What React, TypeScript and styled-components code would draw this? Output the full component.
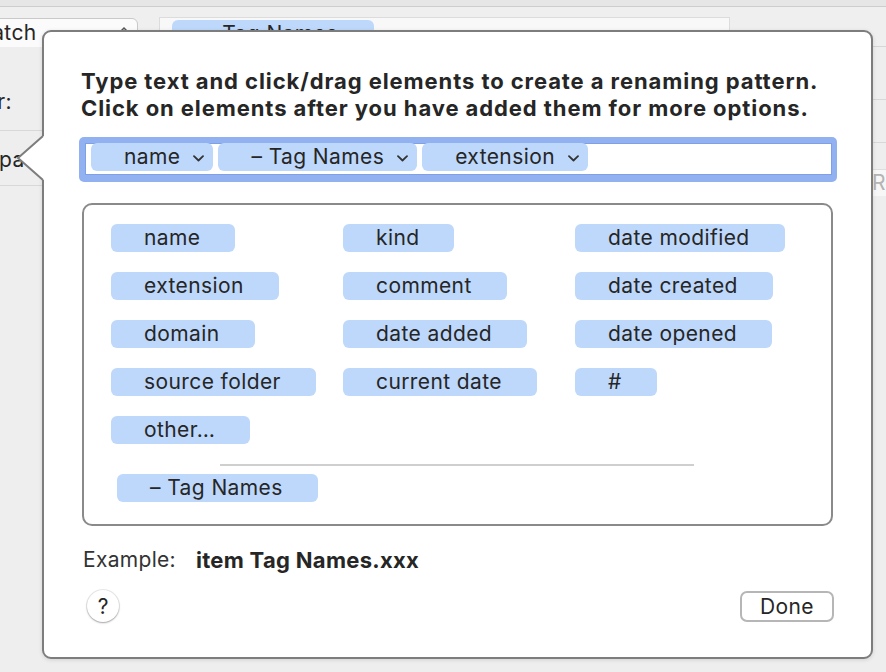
import React from "react";
import styled, { createGlobalStyle } from "styled-components";

const Global = createGlobalStyle`
  html, body { margin: 0; padding: 0; background: #ececec; }
  body {
    font-family: Inter, "Helvetica Neue", "Liberation Sans", Arial, sans-serif;
    -webkit-font-smoothing: antialiased;
    color: #262626;
  }
  #root { width: 886px; height: 672px; position: relative; overflow: hidden; }
`;

const Page = styled.div`
  position: relative;
  width: 886px;
  height: 672px;
  overflow: hidden;
  background: #ececec;
`;

/* ---------- background window (mostly hidden) ---------- */
const BackWindow = styled.div`
  display: flex;
  flex-direction: column;
  width: 886px;
  height: 672px;
`;

const TitleStrip = styled.div`
  height: 6px;
  background: #e6e6e6;
  border-bottom: 1px solid #cdcdcd;
`;

const TopRow = styled.div`
  height: 40px;
  display: flex;
  align-items: flex-start;
  background: #efefef;
  border-bottom: 1px solid #d6d6d6;
  box-sizing: border-box;
`;

const BackPopupButton = styled.div`
  margin: 11px 0 0 -60px;
  width: 198px;
  height: 30px;
  box-sizing: border-box;
  padding: 0 8px 0 37px;
  background: #fbfbfb;
  border: 1px solid #c9c9c9;
  border-radius: 6px;
  font-size: 21px;
  letter-spacing: 0.4px;
  line-height: 28px;
  display: flex;
  align-items: center;
  justify-content: space-between;
`;

const BackField = styled.div`
  margin: 10px 0 0 21px;
  width: 571px;
  height: 34px;
  box-sizing: border-box;
  background: #f8f8f8;
  border: 1px solid #dcdcdc;
  padding: 2px 0 0 12px;
`;

const BackToken = styled.div`
  width: 202px;
  height: 28px;
  box-sizing: border-box;
  padding-left: 33px;
  background: #bed8fb;
  border-radius: 6px;
  font-size: 21px;
  letter-spacing: 0.4px;
  line-height: 28px;
`;

const BackBody = styled.div`
  flex: 1;
  display: flex;
  justify-content: space-between;
  background: #eeeeee;
`;

const BackLeft = styled.div`
  margin-left: -60px;
  width: 150px;
  display: flex;
  flex-direction: column;
`;

const BackLabelRow = styled.div<{ $h: number; $pt: number }>`
  height: ${(p) => p.$h}px;
  box-sizing: border-box;
  padding-top: ${(p) => p.$pt}px;
  border-bottom: 1px solid #d8d8d8;
  font-size: 21px;
  letter-spacing: 0.4px;
  line-height: 24px;
  color: #262626;
  white-space: nowrap;
`;

const RightLabel = styled.div`
  width: 72px;
  text-align: right;
`;

const IndentLabel = styled.div`
  padding-left: 59px;
`;

const BackRight = styled.div`
  margin-right: -64px;
  width: 100px;
  display: flex;
  flex-direction: column;
`;

const BackRightRow = styled.div<{ $h: number }>`
  height: ${(p) => p.$h}px;
  border-bottom: 1px solid #d8d8d8;
  box-sizing: border-box;
`;

const BackRightField = styled.div`
  margin: 26px 0 0 10px;
  height: 26px;
  background: #f7f7f7;
  border-top: 1px solid #dedede;
  font-size: 21px;
  line-height: 26px;
  padding-left: 12px;
  color: #b4b4b4;
`;

/* ---------- popover ---------- */
const Popover = styled.div`
  position: absolute;
  left: 42px;
  top: 30px;
  width: 831px;
  height: 629px;
  box-sizing: border-box;
  background: #ffffff;
  border: 2px solid #7d7d7d;
  border-radius: 9px;
  padding: 36px 37px 0 37px;
  display: flex;
  flex-direction: column;
  box-shadow: 0 1px 4px rgba(0, 0, 0, 0.12);
`;

const Arrow = styled.svg`
  position: absolute;
  left: -27px;
  top: 104px;
  overflow: visible;
`;

const Headline = styled.div`
  font-size: 22px;
  font-weight: 700;
  letter-spacing: 0.92px;
  line-height: 27px;
  color: #262626;
  white-space: nowrap;
`;

const PatternField = styled.div`
  margin: 15px 0 0 -2px;
  width: 758px;
  height: 45px;
  box-sizing: border-box;
  border-radius: 5px;
  background: #92b1f1;
  padding: 6px 5px 7px 6px;
`;

const PatternInner = styled.div`
  height: 100%;
  box-sizing: border-box;
  background: #ffffff;
  box-shadow: inset 0 0 0 1px #7f9fe6;
  display: flex;
  align-items: center;
  gap: 5px;
  padding: 0 6px;
`;

const Token = styled.div<{ $chevron?: boolean }>`
  height: 28px;
  box-sizing: border-box;
  display: inline-flex;
  align-items: center;
  gap: 13px;
  padding: ${(p) => (p.$chevron ? "0 9px 0 33px" : "0 35px 0 33px")};
  background: #bed8fb;
  border-radius: 6px;
  font-size: 21px;
  letter-spacing: 0.4px;
  line-height: 28px;
  color: #262626;
  white-space: nowrap;
  align-self: flex-start;
`;

const Chevron = styled.svg`
  flex: none;
  margin-top: 2px;
`;

const ElementBox = styled.div`
  margin: 21px 0 0 1px;
  width: 751px;
  height: 323px;
  box-sizing: border-box;
  border: 2px solid #8a8a8a;
  border-radius: 10px;
  padding: 19px 0 0 27px;
  display: flex;
  flex-direction: column;
`;

const Columns = styled.div`
  display: flex;
`;

const Column = styled.div`
  width: 232px;
  display: flex;
  flex-direction: column;
  gap: 20px;
`;

const Separator = styled.div`
  margin: 20px 0 0 109px;
  width: 474px;
  height: 2px;
  background: #cfcfcf;
`;

const TagRow = styled.div`
  margin: 8px 0 0 6px;
  display: flex;
`;

const ExampleRow = styled.div`
  margin: 22px 0 0 2px;
  display: flex;
  gap: 20px;
  font-size: 21px;
  letter-spacing: 0.3px;
  line-height: 24px;
`;

const ExampleLabel = styled.span`
  color: #333333;
`;

const ExampleValue = styled.span`
  font-size: 22px;
  font-weight: 700;
  color: #262626;
`;

const BottomRow = styled.div`
  margin-top: 18px;
  padding-left: 6px;
  display: flex;
  align-items: center;
  justify-content: space-between;
`;

const HelpButton = styled.div`
  width: 32px;
  height: 32px;
  border-radius: 50%;
  background: #ffffff;
  box-shadow: 0 0 0 1px rgba(0, 0, 0, 0.08), 0 1px 2px rgba(0, 0, 0, 0.3);
  display: flex;
  align-items: center;
  justify-content: center;
  font-size: 21px;
  color: #262626;
`;

const DoneButton = styled.div`
  width: 94px;
  height: 31px;
  box-sizing: border-box;
  border: 2px solid #b6b6b6;
  border-radius: 7px;
  background: #ffffff;
  display: flex;
  align-items: center;
  justify-content: center;
  font-size: 21px;
  letter-spacing: 0.4px;
  color: #262626;
`;

const UpDown = styled.svg`
  flex: none;
`;

const ChevronIcon = () => (
  <Chevron width="11" height="7" viewBox="0 0 11 7">
    <path d="M1 1.2 L5.5 5.5 L10 1.2" fill="none" stroke="#333" strokeWidth="1.8" strokeLinecap="round" strokeLinejoin="round" />
  </Chevron>
);

const col1 = ["name", "extension", "domain", "source folder", "other…"];
const col2 = ["kind", "comment", "date added", "current date"];
const col3 = ["date modified", "date created", "date opened", "#"];

export default function App() {
  return (
    <Page>
      <Global />
      <BackWindow>
        <TitleStrip />
        <TopRow>
          <BackPopupButton>
            Batch
            <UpDown width="10" height="16" viewBox="0 0 10 16">
              <path d="M2 6 L5 3 L8 6 M2 10 L5 13 L8 10" fill="none" stroke="#555" strokeWidth="1.5" />
            </UpDown>
          </BackPopupButton>
          <BackField>
            <BackToken>– Tag Names</BackToken>
          </BackField>
        </TopRow>
        <BackBody>
          <BackLeft>
            <BackLabelRow $h={84} $pt={43}>
              <RightLabel>Folder:</RightLabel>
            </BackLabelRow>
            <BackLabelRow $h={55} $pt={17}>
              <IndentLabel>pattern</IndentLabel>
            </BackLabelRow>
          </BackLeft>
          <BackRight>
            <BackRightRow $h={53} />
            <BackRightRow $h={43} />
            <BackRightField>Rename</BackRightField>
          </BackRight>
        </BackBody>
      </BackWindow>

      <Popover>
        <Arrow width="30" height="44" viewBox="0 0 30 44">
          <polygon points="31,0 26,0 1,22 26,44 31,44" fill="#ffffff" />
          <polyline points="26,0 1,22 26,44" fill="none" stroke="#7d7d7d" strokeWidth="2" strokeLinejoin="miter" />
        </Arrow>
        <Headline>
          Type text and click/drag elements to create a renaming pattern.
          <br />
          Click on elements after you have added them for more options.
        </Headline>
        <PatternField>
          <PatternInner>
            <Token $chevron>
              name
              <ChevronIcon />
            </Token>
            <Token $chevron>
              – Tag Names
              <ChevronIcon />
            </Token>
            <Token $chevron>
              extension
              <ChevronIcon />
            </Token>
          </PatternInner>
        </PatternField>
        <ElementBox>
          <Columns>
            <Column>
              {col1.map((t) => (
                <Token key={t}>{t}</Token>
              ))}
            </Column>
            <Column>
              {col2.map((t) => (
                <Token key={t}>{t}</Token>
              ))}
            </Column>
            <Column>
              {col3.map((t) => (
                <Token key={t}>{t}</Token>
              ))}
            </Column>
          </Columns>
          <Separator />
          <TagRow>
            <Token>– Tag Names</Token>
          </TagRow>
        </ElementBox>
        <ExampleRow>
          <ExampleLabel>Example:</ExampleLabel>
          <ExampleValue>item Tag Names.xxx</ExampleValue>
        </ExampleRow>
        <BottomRow>
          <HelpButton>?</HelpButton>
          <DoneButton>Done</DoneButton>
        </BottomRow>
      </Popover>
    </Page>
  );
}
